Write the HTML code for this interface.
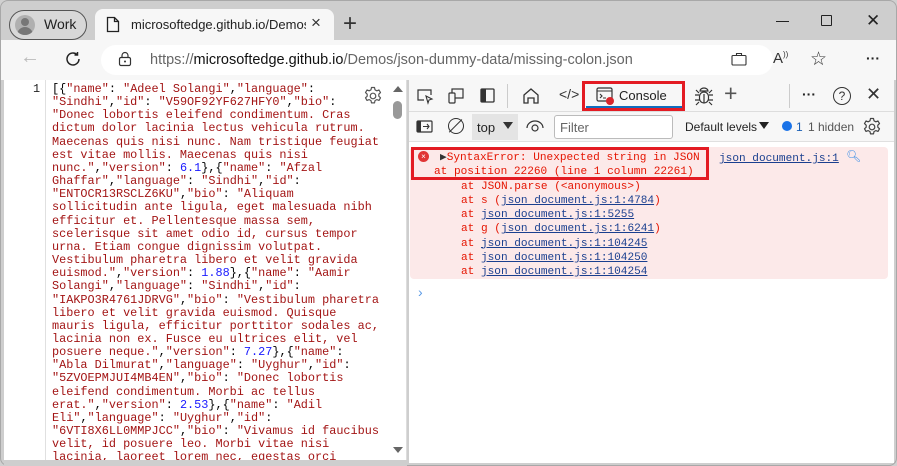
<!DOCTYPE html>
<html><head><style>
*{margin:0;padding:0;box-sizing:border-box}
body{width:897px;height:466px;overflow:hidden;background:#d0d0d0;font-family:"Liberation Sans",sans-serif;position:relative}
.a{position:absolute}
pre{font-family:"Liberation Mono",monospace;font-size:11.85px;line-height:13.15px;color:#000}
.s{color:#a31515}.n{color:#1a1aff}
.dt{font-size:12px;color:#222}
.red{color:#e51400}
.lk{color:#1a3f8f;text-decoration:underline}
</style></head><body>
<div class="a" style="left:0;top:0;width:897px;height:466px;border:1px solid #a8a8a8;border-radius:8px;background:#cecece"></div>
<div class="a" style="left:9px;top:10px;width:78px;height:30px;border:1.5px solid #555;border-radius:15px;background:#d8d8d8"></div>
<div class="a" style="left:15px;top:15px;width:20px;height:20px;border-radius:50%;background:#b0b0b0;overflow:hidden"><div class="a" style="left:6px;top:3px;width:8px;height:8px;border-radius:50%;background:#777"></div><div class="a" style="left:2px;top:12px;width:16px;height:10px;border-radius:8px 8px 0 0;background:#777"></div></div>
<div class="a" style="left:44px;top:16px;font-size:14px;color:#222">Work</div>
<div class="a" style="left:95px;top:9px;width:239px;height:34px;background:#f7f7f7;border-radius:8px 8px 0 0"></div>
<svg class="a" style="left:106px;top:16px" width="14" height="17"><path d="M1.5 1.5h7l4 4v10h-11z M8.5 1.5v4h4" fill="none" stroke="#222" stroke-width="1.3"/></svg>
<div class="a" style="left:131px;top:17px;font-size:13px;color:#222;width:175px;overflow:hidden;white-space:nowrap">microsoftedge.github.io/Demos/j</div>
<div class="a" style="left:311px;top:13px;font-size:17px;color:#333">×</div>
<div class="a" style="left:343px;top:10px;font-size:24px;color:#333;font-weight:300">+</div>
<div class="a" style="left:776px;top:21px;width:13px;height:1px;background:#222"></div>
<div class="a" style="left:821px;top:15px;width:11px;height:11px;border:1.2px solid #222;border-radius:1px"></div>
<div class="a" style="left:866px;top:11px;font-size:17px;color:#222">✕</div>
<div class="a" style="left:1px;top:40px;width:895px;height:40px;background:#f7f7f7"></div>
<div class="a" style="left:20px;top:46px;font-size:20px;color:#bbb">←</div>
<svg class="a" style="left:64px;top:50px" width="18" height="18"><path d="M15 9a6 6 0 1 1-2-4.5M13.5 2v3h-3" fill="none" stroke="#222" stroke-width="1.5"/></svg>
<div class="a" style="left:101px;top:45px;width:672px;height:30px;background:#fff;border-radius:15px"></div>
<svg class="a" style="left:118px;top:51px" width="14" height="16"><rect x="1.5" y="6.5" width="11" height="8" rx="1.5" fill="none" stroke="#333" stroke-width="1.2"/><path d="M4 6.5v-2a3 3 0 0 1 6 0v2" fill="none" stroke="#333" stroke-width="1.2"/><circle cx="7" cy="10.5" r="1" fill="#333"/></svg>
<div class="a" style="left:150px;top:52px;font-size:14.5px;color:#666;white-space:nowrap">https://<span style="color:#111">microsoftedge.github.io</span>/Demos/json-dummy-data/missing-colon.json</div>
<svg class="a" style="left:731px;top:52px" width="16" height="14"><rect x="1" y="3.5" width="14" height="9.5" rx="1" fill="none" stroke="#333" stroke-width="1.1"/><path d="M5.5 3.5v-2h5v2" fill="none" stroke="#333" stroke-width="1.1"/></svg>
<div class="a" style="left:773px;top:50px;font-size:15px;color:#333">A<sup style="font-size:8px">))</sup></div>
<div class="a" style="left:810px;top:48px;font-size:19px;color:#333">☆</div>
<div class="a" style="left:866px;top:50px;font-size:14px;color:#222;font-weight:bold">···</div>
<div class="a" style="left:4px;top:80px;width:403px;height:380px;background:#fff;border-right:1px solid #ddd"></div>
<div class="a" style="left:45px;top:80px;width:1px;height:380px;background:#e0e0e0"></div>
<pre class="a" style="left:33px;top:83px;color:#222">1</pre>
<pre class="a" style="left:52px;top:83px"><span>[{</span><span class="s">"name"</span>: <span class="s">"Adeel Solangi"</span>,<span class="s">"language"</span>:
<span class="s">"Sindhi"</span>,<span class="s">"id"</span>: <span class="s">"V59OF92YF627HFY0"</span>,<span class="s">"bio"</span>:
<span class="s">"Donec lobortis eleifend condimentum. Cras
dictum dolor lacinia lectus vehicula rutrum.
Maecenas quis nisi nunc. Nam tristique feugiat
est vitae mollis. Maecenas quis nisi
nunc."</span>,<span class="s">"version"</span>: <span class="n">6.1</span>},{<span class="s">"name"</span>: <span class="s">"Afzal
Ghaffar"</span>,<span class="s">"language"</span>: <span class="s">"Sindhi"</span>,<span class="s">"id"</span>:
<span class="s">"ENTOCR13RSCLZ6KU"</span>,<span class="s">"bio"</span>: <span class="s">"Aliquam
sollicitudin ante ligula, eget malesuada nibh
efficitur et. Pellentesque massa sem,
scelerisque sit amet odio id, cursus tempor
urna. Etiam congue dignissim volutpat.
Vestibulum pharetra libero et velit gravida
euismod."</span>,<span class="s">"version"</span>: <span class="n">1.88</span>},{<span class="s">"name"</span>: <span class="s">"Aamir
Solangi"</span>,<span class="s">"language"</span>: <span class="s">"Sindhi"</span>,<span class="s">"id"</span>:
<span class="s">"IAKPO3R4761JDRVG"</span>,<span class="s">"bio"</span>: <span class="s">"Vestibulum pharetra
libero et velit gravida euismod. Quisque
mauris ligula, efficitur porttitor sodales ac,
lacinia non ex. Fusce eu ultrices elit, vel
posuere neque."</span>,<span class="s">"version"</span>: <span class="n">7.27</span>},{<span class="s">"name"</span>:
<span class="s">"Abla Dilmurat"</span>,<span class="s">"language"</span>: <span class="s">"Uyghur"</span>,<span class="s">"id"</span>:
<span class="s">"5ZVOEPMJUI4MB4EN"</span>,<span class="s">"bio"</span>: <span class="s">"Donec lobortis
eleifend condimentum. Morbi ac tellus
erat."</span>,<span class="s">"version"</span>: <span class="n">2.53</span>},{<span class="s">"name"</span>: <span class="s">"Adil
Eli"</span>,<span class="s">"language"</span>: <span class="s">"Uyghur"</span>,<span class="s">"id"</span>:
<span class="s">"6VTI8X6LL0MMPJCC"</span>,<span class="s">"bio"</span>: <span class="s">"Vivamus id faucibus
velit, id posuere leo. Morbi vitae nisi
lacinia, laoreet lorem nec, egestas orci</span></pre>
<div class="a" style="left:4px;top:460px;width:403px;height:6px;background:#cecece"></div>
<svg class="a" style="left:363px;top:86px" width="20" height="20" viewBox="0 0 20 20"><circle cx="10" cy="10" r="2.8" fill="none" stroke="#555" stroke-width="1.2"/><path d="M8.5 1.5h3l.5 2.3 1.8 1 2.2-.8 1.5 2.6-1.7 1.6v2l1.7 1.6-1.5 2.6-2.2-.8-1.8 1-.5 2.3h-3l-.5-2.3-1.8-1-2.2.8-1.5-2.6 1.7-1.6v-2L2.5 6.6 4 4l2.2.8 1.8-1z" fill="none" stroke="#555" stroke-width="1.2" stroke-linejoin="round"/></svg>
<div class="a" style="left:393px;top:86px;width:0;height:0;border-left:5px solid transparent;border-right:5px solid transparent;border-bottom:6px solid #666"></div>
<div class="a" style="left:393px;top:101px;width:9px;height:18px;border-radius:5px;background:#999"></div>
<div class="a" style="left:393px;top:447px;width:0;height:0;border-left:5px solid transparent;border-right:5px solid transparent;border-top:6px solid #666"></div>
<div class="a" style="left:409px;top:80px;width:485px;height:383px;background:#fff"></div>
<div class="a" style="left:409px;top:80px;width:485px;height:32px;background:#f7f7f7;border-bottom:1px solid #ddd"></div>
<svg class="a" style="left:416px;top:87px" width="18" height="18"><path d="M15 8V3H2v10h6" fill="none" stroke="#333" stroke-width="1.2"/><path d="M10 9l6 3-3 1-1 3z" fill="none" stroke="#333" stroke-width="1.1"/></svg>
<svg class="a" style="left:447px;top:87px" width="18" height="18"><rect x="5" y="2" width="11" height="9" fill="none" stroke="#333" stroke-width="1.2"/><rect x="2" y="6" width="6" height="10" rx="1" fill="#f7f7f7" stroke="#333" stroke-width="1.2"/></svg>
<svg class="a" style="left:479px;top:87px" width="18" height="18"><rect x="2" y="2" width="13" height="13" rx="1" fill="none" stroke="#333" stroke-width="1.3"/><rect x="2" y="2" width="5" height="13" fill="#333"/></svg>
<div class="a" style="left:507px;top:84px;width:1px;height:24px;background:#ccc"></div>
<svg class="a" style="left:522px;top:87px" width="18" height="18"><path d="M2 8l7-6 7 6v8h-4v-5H6v5H2z" fill="none" stroke="#333" stroke-width="1.3"/></svg>
<div class="a" style="left:559px;top:86px;font-size:14px;color:#333">&lt;/&gt;</div>
<div class="a" style="left:582px;top:81px;width:103px;height:30px;border:3px solid #e31b23"></div>
<div class="a" style="left:586px;top:106px;width:96px;height:2px;background:#0f6cbd"></div>
<svg class="a" style="left:596px;top:87px" width="20" height="18"><rect x="1" y="1" width="15" height="13" rx="1.5" fill="none" stroke="#333" stroke-width="1.2"/><path d="M1 4h15M4 7l2 2-2 2M7 11h3" fill="none" stroke="#333" stroke-width="1.1"/><circle cx="14" cy="14" r="4" fill="#d9262c"/></svg>
<div class="a" style="left:619px;top:88px;font-size:13px;color:#222">Console</div>
<svg class="a" style="left:694px;top:86px" width="20" height="20"><path d="M6 5a4 3 0 0 1 8 0z" fill="none" stroke="#333" stroke-width="1.2"/><rect x="5.5" y="6" width="9" height="11" rx="4.5" fill="none" stroke="#333" stroke-width="1.2"/><path d="M10 8v9M1 9h4M15 9h4M1 14h4.5M14.5 14h4.5M2 4l3 3M18 4l-3 3M2 19l3-3M18 19l-3-3" fill="none" stroke="#333" stroke-width="1.2"/></svg>
<div class="a" style="left:724px;top:80px;font-size:23px;color:#555;font-weight:300">+</div>
<div class="a" style="left:789px;top:84px;width:1px;height:24px;background:#ccc"></div>
<div class="a" style="left:802px;top:86px;font-size:14px;color:#222;font-weight:bold">···</div>
<div class="a" style="left:833px;top:87px;width:18px;height:18px;border:1.3px solid #333;border-radius:50%;font-size:12px;text-align:center;line-height:16px;color:#333">?</div>
<div class="a" style="left:866px;top:84px;font-size:18px;color:#333">✕</div>
<div class="a" style="left:409px;top:112px;width:485px;height:30px;background:#f7f7f7;border-bottom:1px solid #e0e0e0"></div>
<svg class="a" style="left:416px;top:119px" width="18" height="16"><rect x="1" y="2" width="15" height="11" rx="1" fill="none" stroke="#333" stroke-width="1.2"/><rect x="1" y="2" width="4" height="11" fill="#333"/><path d="M7 7.5h6M11 5l2 2.5-2 2.5" fill="none" stroke="#333" stroke-width="1.1"/></svg>
<div class="a" style="left:448px;top:118px;width:16px;height:16px;border:1.4px solid #333;border-radius:50%"></div>
<div class="a" style="left:455px;top:117px;width:1.4px;height:18px;background:#333;transform:rotate(45deg)"></div>
<div class="a" style="left:472px;top:114px;width:46px;height:26px;background:#e4e4e4"></div>
<div class="a dt" style="left:477px;top:120px;font-size:13px">top</div>
<div class="a" style="left:503px;top:122px;border-left:5px solid transparent;border-right:5px solid transparent;border-top:7px solid #333"></div>
<svg class="a" style="left:526px;top:119px" width="18" height="14"><path d="M1 9a8 7 0 0 1 16 0" fill="none" stroke="#333" stroke-width="1.2"/><circle cx="9" cy="9" r="3" fill="none" stroke="#333" stroke-width="1.2"/></svg>
<div class="a" style="left:554px;top:115px;width:119px;height:24px;border:1px solid #bbb;border-radius:3px;background:#fff"></div>
<div class="a" style="left:560px;top:120px;font-size:13px;color:#666">Filter</div>
<div class="a dt" style="left:685px;top:120px">Default levels</div>
<div class="a" style="left:759px;top:122px;border-left:5px solid transparent;border-right:5px solid transparent;border-top:7px solid #222"></div>
<div class="a" style="left:782px;top:121px;width:10px;height:10px;border-radius:50%;background:#1a73e8"></div>
<div class="a dt" style="left:796px;top:120px;color:#1a5fb4">1</div>
<div class="a dt" style="left:808px;top:120px;color:#555">1 hidden</div>
<svg class="a" style="left:862px;top:117px" width="20" height="20" viewBox="0 0 20 20"><circle cx="10" cy="10" r="2.8" fill="none" stroke="#444" stroke-width="1.2"/><path d="M8.5 1.5h3l.5 2.3 1.8 1 2.2-.8 1.5 2.6-1.7 1.6v2l1.7 1.6-1.5 2.6-2.2-.8-1.8 1-.5 2.3h-3l-.5-2.3-1.8-1-2.2.8-1.5-2.6 1.7-1.6v-2L2.5 6.6 4 4l2.2.8 1.8-1z" fill="none" stroke="#444" stroke-width="1.2" stroke-linejoin="round"/></svg>
<div class="a" style="left:410px;top:147px;width:478px;height:132px;background:#fce9e9;border-radius:4px"></div>
<div class="a" style="left:411px;top:147px;width:298px;height:33px;border:3px solid #e31b23"></div>
<div class="a" style="left:418px;top:151px;width:11px;height:11px;border-radius:50%;background:#e03535;color:#fff;font-size:8px;line-height:11px;text-align:center">×</div>
<pre class="a red" style="left:440px;top:151px;font-size:11.1px;line-height:14px"><span style="color:#333">▶</span>SyntaxError: Unexpected string in JSON</pre>
<pre class="a red" style="left:434px;top:165px;font-size:11.1px;line-height:14px">at position 22260 (line 1 column 22261)</pre>
<pre class="a" style="left:719px;top:153px;font-size:11.1px"><span class="lk">json document.js:1</span></pre>
<div class="a" style="left:846px;top:149px;font-size:12px;color:#3a8ee6">🔍︎</div>
<pre class="a red" style="left:461px;top:180px;font-size:11.1px;line-height:14.15px">at JSON.parse (&lt;anonymous&gt;)
at s (<span class="lk">json document.js:1:4784</span>)
at <span class="lk">json document.js:1:5255</span>
at g (<span class="lk">json document.js:1:6241</span>)
at <span class="lk">json document.js:1:104245</span>
at <span class="lk">json document.js:1:104250</span>
at <span class="lk">json document.js:1:104254</span></pre>
<div class="a" style="left:418px;top:284px;font-size:14px;color:#5a9ae6">›</div>
</body></html>
